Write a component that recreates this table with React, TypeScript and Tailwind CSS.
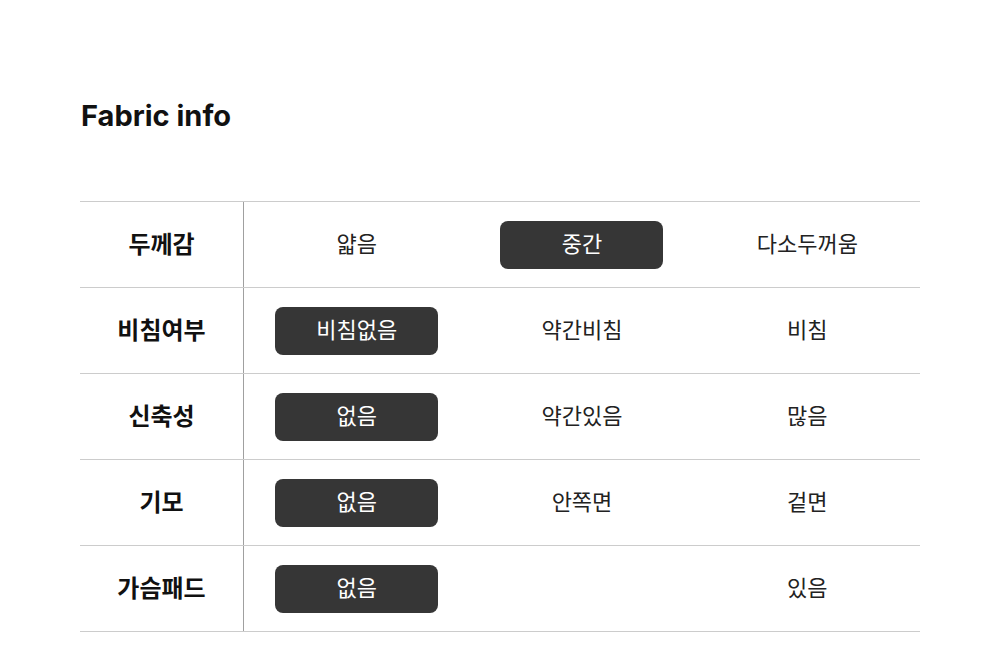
import React from "react";

const rows: { label: string; values: string[]; active: number }[] = [
  { label: "두께감", values: ["얇음", "중간", "다소두꺼움"], active: 1 },
  { label: "비침여부", values: ["비침없음", "약간비침", "비침"], active: 0 },
  { label: "신축성", values: ["없음", "약간있음", "많음"], active: 0 },
  { label: "기모", values: ["없음", "안쪽면", "겉면"], active: 0 },
  { label: "가슴패드", values: ["없음", "", "있음"], active: 0 },
];

export default function App() {
  return (
    <div
      className="w-[1000px] h-[654px] bg-white overflow-hidden"
      style={{ fontFamily: "Inter, 'Noto Sans CJK KR', sans-serif" }}
    >
      <div className="pl-[81px] pt-[96px]">
        <h1 className="text-[29px] font-bold leading-[40px] text-[#111]">Fabric info</h1>
      </div>
      <div className="ml-[80px] mt-[65px] w-[840px] border-t border-[#cccccc]">
        {rows.map((r) => (
          <div key={r.label} className="flex h-[86px] border-b border-[#cccccc]">
            <div className="w-[164px] border-r border-[#a0a0a0] flex items-center justify-center text-[24px] font-bold text-[#111]">
              {r.label}
            </div>
            <div className="flex-1 grid grid-cols-3">
              {r.values.map((v, i) => (
                <div key={i} className="flex items-center justify-center">
                  {i === r.active ? (
                    <div className="w-[163px] h-[48px] rounded-[8px] bg-[#363636] text-white flex items-center justify-center text-[22px]">
                      {v}
                    </div>
                  ) : (
                    <span className="text-[22px] text-[#222]">{v}</span>
                  )}
                </div>
              ))}
            </div>
          </div>
        ))}
      </div>
    </div>
  );
}
